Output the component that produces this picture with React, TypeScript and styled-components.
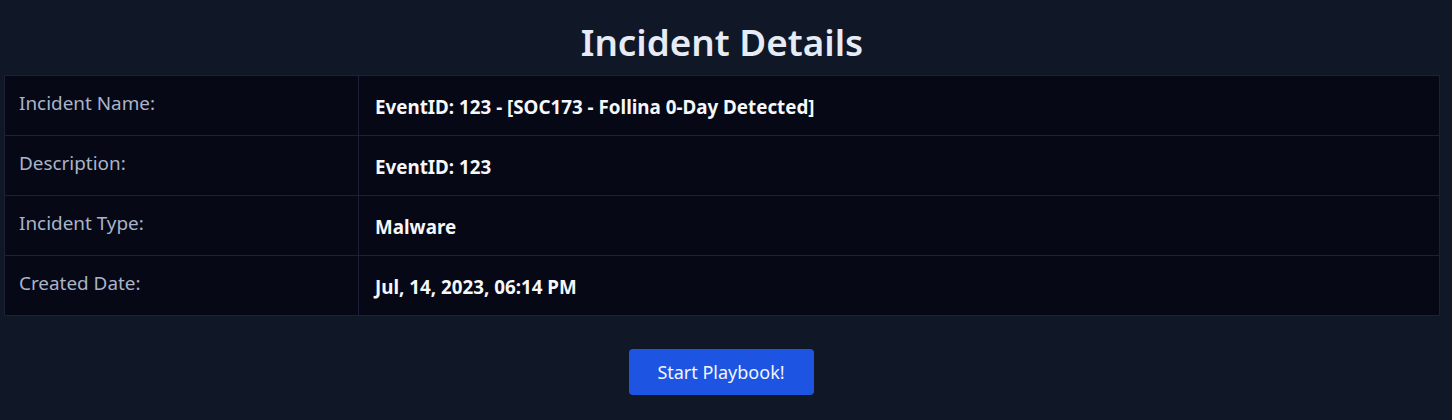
import React from "react";
import styled, { createGlobalStyle } from "styled-components";

const Global = createGlobalStyle`
  html, body { margin: 0; padding: 0; background: #101827; }
  body { font-family: "Noto Sans", "Open Sans", sans-serif; }
`;

const Page = styled.div`
  display: flex;
  flex-direction: column;
  align-items: center;
  padding: 18px 12px 0 4px;
  min-height: 420px;
  box-sizing: border-box;
`;

const Title = styled.h1`
  margin: 0 0 9px;
  font-size: 36.8px;
  line-height: 48px;
  font-weight: 600;
  color: #e6ebf5;
`;

const Table = styled.table`
  width: 100%;
  border-collapse: collapse;
  background: #060816;
  border: 1px solid #1d2038;
`;

const Row = styled.tr`
  border-bottom: 1px solid #1d2038;
`;

const Cell = styled.td<{ $label?: boolean }>`
  height: 60px;
  box-sizing: border-box;
  padding: ${(p) => (p.$label ? "13px 14px 19px" : "16px 16px 14px 16px")};
  vertical-align: middle;
  font-size: ${(p) => (p.$label ? "18.9px" : "18.8px")};
  line-height: 26px;
  color: ${(p) => (p.$label ? "#aab4c8" : "#f5f7fb")};
  font-weight: ${(p) => (p.$label ? 400 : 700)};
  width: ${(p) => (p.$label ? "354px" : "auto")};
  border-right: ${(p) => (p.$label ? "1px solid #1d2038" : "none")};
`;

const Button = styled.button`
  margin-top: 33px;
  margin-right: 2px;
  width: 185px;
  height: 46px;
  border: none;
  border-radius: 4px;
  background: #1d55e2;
  color: #f3f6fd;
  font-family: "Noto Sans", "Open Sans", sans-serif;
  font-size: 18px;
  cursor: pointer;
`;

const rows: [string, string][] = [
  ["Incident Name:", "EventID: 123 - [SOC173 - Follina 0-Day Detected]"],
  ["Description:", "EventID: 123"],
  ["Incident Type:", "Malware"],
  ["Created Date:", "Jul, 14, 2023, 06:14 PM"],
];

export default function App() {
  return (
    <>
      <Global />
      <Page>
        <Title>Incident Details</Title>
        <Table>
          <tbody>
            {rows.map(([k, v]) => (
              <Row key={k}>
                <Cell $label>{k}</Cell>
                <Cell>{v}</Cell>
              </Row>
            ))}
          </tbody>
        </Table>
        <Button>Start Playbook!</Button>
      </Page>
    </>
  );
}
